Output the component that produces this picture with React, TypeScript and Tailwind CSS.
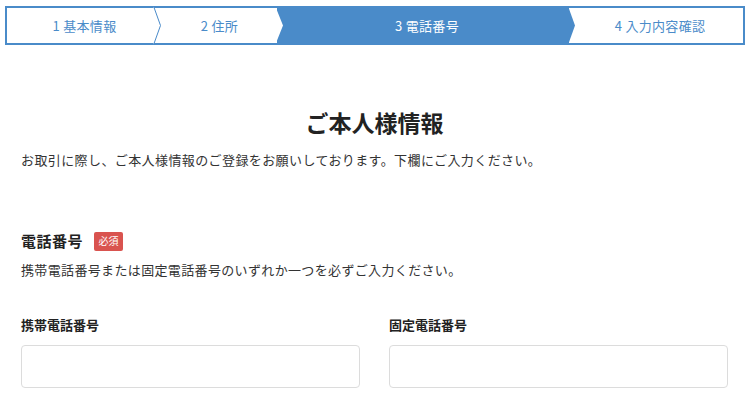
const steps = [
  { label: '1 基本情報', width: 'w-[147px]' },
  { label: '2 住所', width: 'w-[123px]' },
  { label: '3 電話番号', width: 'w-[292px]' },
  { label: '4 入力内容確認', width: 'flex-1' },
];

const ACTIVE = 2;

function Stepper() {
  return (
    <div className="ml-[5px] mt-[6px] flex h-[39px] w-[740px] border-2 border-[#4a8bc9]">
      {steps.map((step, i) => {
        const active = i === ACTIVE;
        return (
          <div
            key={step.label}
            className={`relative flex items-center justify-center pl-[8px] text-[13px] leading-[20px] tracking-[0.3px] ${step.width} ${
              active ? 'bg-[#4a8bc9] text-white' : 'bg-white text-[#4a8bc9]'
            }`}
          >
            {step.label}
            {/* chevron tip overlapping the next step */}
            {i < steps.length - 1 && (
              <svg
                className="absolute top-[-2px] right-[-7px] z-10 h-[39px] w-[8px]"
                viewBox="0 0 8 39"
                preserveAspectRatio="none"
              >
                {i === 0 && (
                  <polyline points="0.5,0 7.5,19.5 0.5,39" fill="white" stroke="#4a8bc9" strokeWidth="1" />
                )}
                {i === 1 && <polygon points="0,2 7,19.5 0,37" fill="white" />}
                {i === 2 && <polygon points="0,0 7,19.5 0,39" fill="#4a8bc9" />}
              </svg>
            )}
          </div>
        );
      })}
    </div>
  );
}

export default function App() {
  return (
    <div
      className="min-h-screen bg-white text-[#333]"
      style={{ fontFamily: '"Noto Sans CJK JP", "Noto Sans", sans-serif' }}
    >
      <Stepper />

      <div className="mx-[21px] w-[707px]">
        {/* Title */}
        <h1 className="mt-[61px] text-center text-[23px] font-bold leading-[32px] text-[#222]">
          ご本人様情報
        </h1>
        <p className="mt-[12px] text-[13px] leading-[20px] tracking-[0.4px]">
          お取引に際し、ご本人様情報のご登録をお願いしております。下欄にご入力ください。
        </p>

        {/* Phone section */}
        <div className="mt-[61px] flex h-[20px] items-center gap-[11px]">
          <h2 className="text-[15px] font-bold leading-[20px] tracking-[0.5px] text-[#222]">電話番号</h2>
          <span className="flex h-[19px] w-[29px] items-center justify-center rounded-[2px] bg-[#d9534f] text-[10px] leading-none text-white">
            必須
          </span>
        </div>
        <p className="mt-[9px] text-[13px] leading-[20px] tracking-[0.35px]">
          携帯電話番号または固定電話番号のいずれか一つを必ずご入力ください。
        </p>

        <div className="mt-[35px] grid grid-cols-2 gap-[29px]">
          <div>
            <label className="block text-[13px] font-bold leading-[20px] text-[#222]">携帯電話番号</label>
            <input
              type="tel"
              className="mt-[10px] block h-[43px] w-full rounded-[4px] border border-[#dcdcdc] px-3 outline-none"
            />
          </div>
          <div>
            <label className="block text-[13px] font-bold leading-[20px] text-[#222]">固定電話番号</label>
            <input
              type="tel"
              className="mt-[10px] block h-[43px] w-full rounded-[4px] border border-[#dcdcdc] px-3 outline-none"
            />
          </div>
        </div>
      </div>
    </div>
  );
}
